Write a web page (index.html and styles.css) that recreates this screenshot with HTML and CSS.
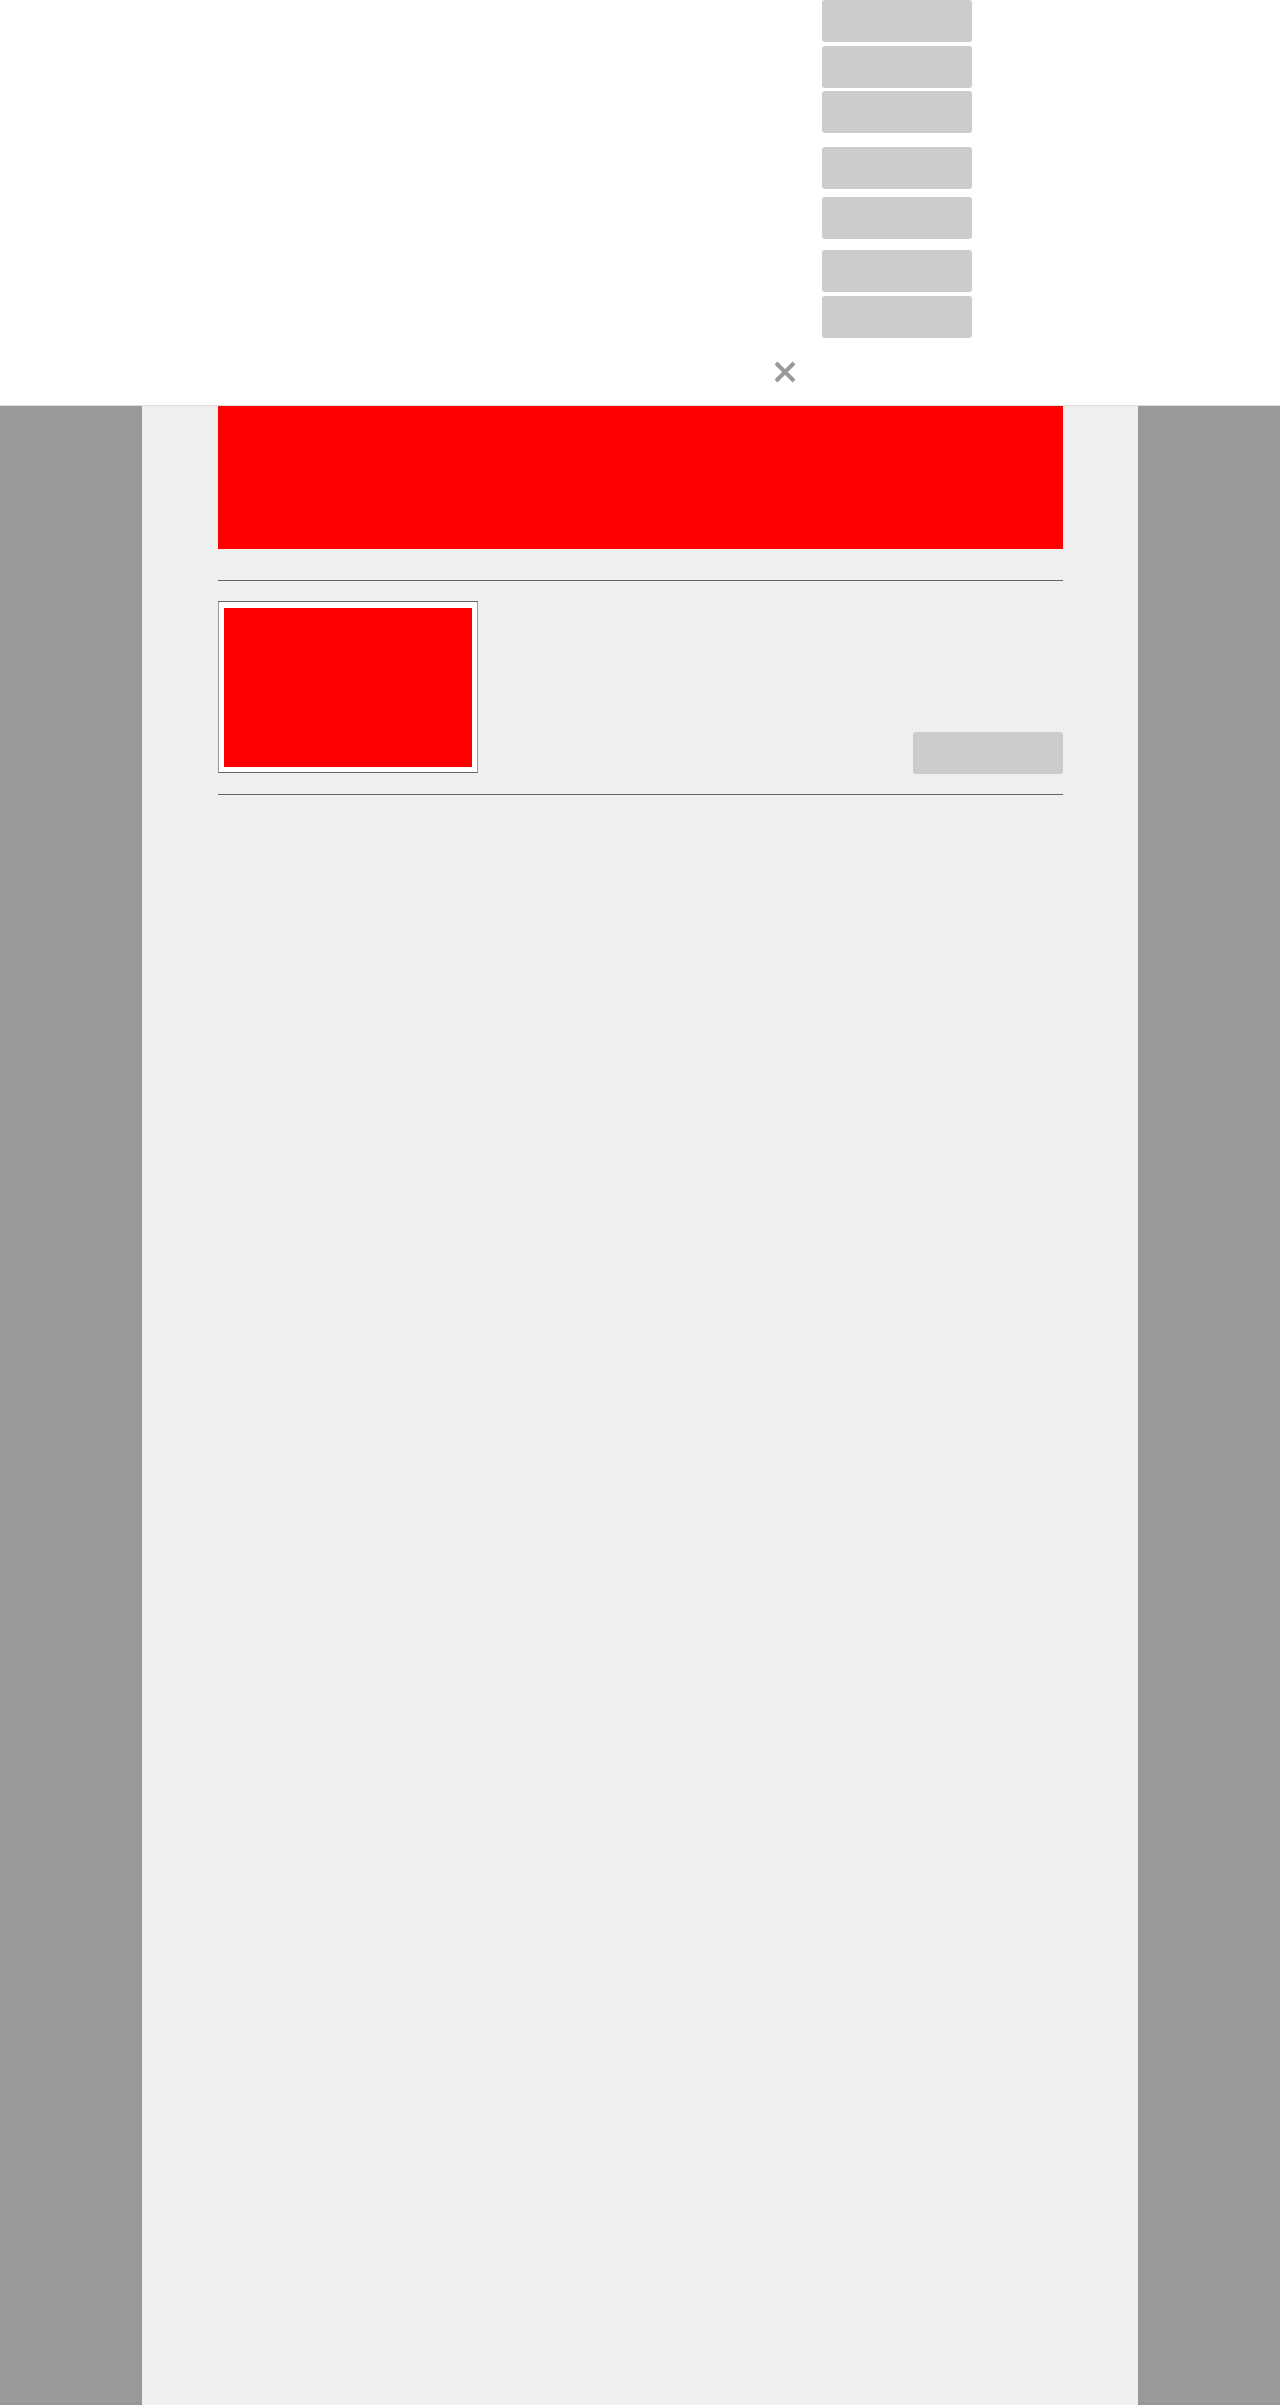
FILE: index.html
```html
<!DOCTYPE html>
<html lang="en">
<head>
<meta charset="utf-8">
<title>Page</title>
<link rel="stylesheet" href="styles.css">
</head>
<body>
<header class="site-header">
  <div class="header-inner">
    <nav class="menu">
      <a class="menu-btn" href="#"></a>
      <a class="menu-btn gap-4" href="#"></a>
      <a class="menu-btn gap-3" href="#"></a>
      <a class="menu-btn gap-14" href="#"></a>
      <a class="menu-btn gap-8" href="#"></a>
      <a class="menu-btn gap-11" href="#"></a>
      <a class="menu-btn gap-4" href="#"></a>
    </nav>
    <button class="close" aria-label="Close">
      <svg viewBox="0 0 22 22" width="22" height="22"><path d="M2 2 L20 20 M20 2 L2 20" stroke="#999" stroke-width="4" stroke-linecap="butt"/></svg>
    </button>
  </div>
</header>
<main class="page">
  <div class="column">
    <div class="content">
      <div class="banner"></div>
      <hr class="rule rule-top">
      <section class="item">
        <div class="thumb"><div class="thumb-img"></div></div>
        <a class="action-btn" href="#"></a>
      </section>
      <hr class="rule">
    </div>
  </div>
</main>
</body>
</html>
```

FILE: styles.css
```css
* { box-sizing: border-box; }
html, body { margin: 0; padding: 0; }
body {
  font-family: "Liberation Sans", Arial, sans-serif;
  background: #999999;
}
.site-header {
  background: #ffffff;
  height: 406px;
  border-bottom: 1px solid #dddddd;
}
.header-inner {
  width: 996px;
  margin: 0 auto;
  display: flex;
  flex-direction: column;
}
.menu {
  display: flex;
  flex-direction: column;
  margin-left: 680px;
  width: 150px;
}
.menu-btn {
  display: block;
  height: 42px;
  background: #cccccc;
  border-radius: 3px;
}
.gap-3 { margin-top: 3px; }
.gap-4 { margin-top: 4px; }
.gap-8 { margin-top: 8px; }
.gap-11 { margin-top: 11px; }
.gap-14 { margin-top: 14px; }
.close {
  margin: 23px 0 0 632px;
  width: 22px;
  height: 22px;
  padding: 0;
  border: 0;
  background: transparent;
  display: block;
}
.close svg { display: block; }
.page {
  display: flex;
  justify-content: center;
}
.column {
  width: 996px;
  min-height: 1999px;
  background: #efefef;
  padding: 0 75px 0 76px;
}
.content {
  display: flex;
  flex-direction: column;
}
.banner {
  height: 143px;
  background: #ff0000;
}
.rule {
  border: 0;
  height: 1px;
  background: #666666;
  margin: 0;
}
.rule-top { margin-top: 31px; }
.item {
  display: flex;
  justify-content: space-between;
  align-items: flex-end;
  padding: 20px 0 21px;
}
.thumb {
  width: 260px;
  height: 172px;
  background: #ffffff;
  border-top: 1px solid #666666;
  border-bottom: 1px solid #666666;
  border-left: 1px solid #999999;
  border-right: 1px solid #999999;
  padding: 6px 5px 5px 5px;
}
.thumb-img {
  width: 248px;
  height: 159px;
  background: #ff0000;
}
.action-btn {
  display: block;
  width: 150px;
  height: 42px;
  background: #cccccc;
  border-radius: 3px;
  margin-bottom: -1px;
}
```
